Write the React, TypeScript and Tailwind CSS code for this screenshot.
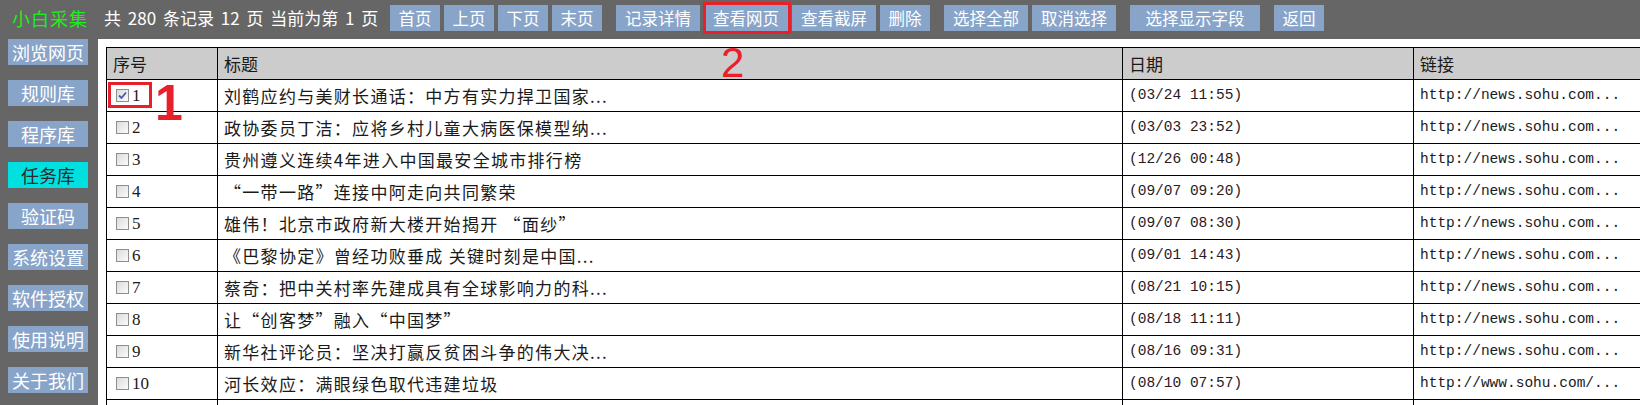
import React from 'react';

interface Row {
  id: number;
  title: string;
  date: string;
  link: string;
}

const rows: Row[] = [
  { id: 1, title: '刘鹤应约与美财长通话：中方有实力捍卫国家...', date: '(03/24 11:55)', link: 'http://news.sohu.com...' },
  { id: 2, title: '政协委员丁洁：应将乡村儿童大病医保模型纳...', date: '(03/03 23:52)', link: 'http://news.sohu.com...' },
  { id: 3, title: '贵州遵义连续4年进入中国最安全城市排行榜', date: '(12/26 00:48)', link: 'http://news.sohu.com...' },
  { id: 4, title: '“一带一路”连接中阿走向共同繁荣', date: '(09/07 09:20)', link: 'http://news.sohu.com...' },
  { id: 5, title: '雄伟！北京市政府新大楼开始揭开 “面纱”', date: '(09/07 08:30)', link: 'http://news.sohu.com...' },
  { id: 6, title: '《巴黎协定》曾经功败垂成 关键时刻是中国...', date: '(09/01 14:43)', link: 'http://news.sohu.com...' },
  { id: 7, title: '蔡奇：把中关村率先建成具有全球影响力的科...', date: '(08/21 10:15)', link: 'http://news.sohu.com...' },
  { id: 8, title: '让“创客梦”融入“中国梦”', date: '(08/18 11:11)', link: 'http://news.sohu.com...' },
  { id: 9, title: '新华社评论员：坚决打赢反贫困斗争的伟大决...', date: '(08/16 09:31)', link: 'http://news.sohu.com...' },
  { id: 10, title: '河长效应：满眼绿色取代违建垃圾', date: '(08/10 07:57)', link: 'http://www.sohu.com/...' },
];

// 顶部按钮分组
const topGroups = [
  [{ t: '首页', w: 'w-[50px]' }, { t: '上页', w: 'w-[50px]' }, { t: '下页', w: 'w-[50px]' }, { t: '末页', w: 'w-[50px]' }],
  [{ t: '记录详情', w: 'w-[84px]' }, { t: '查看网页', w: 'w-[84px]' }, { t: '查看截屏', w: 'w-[84px]' }, { t: '删除', w: 'w-[50px]' }],
  [{ t: '选择全部', w: 'w-[84px]' }, { t: '取消选择', w: 'w-[84px]' }],
  [{ t: '选择显示字段', w: 'w-[130px]' }],
  [{ t: '返回', w: 'w-[50px]' }],
];

const sideMenu = ['浏览网页', '规则库', '程序库', '任务库', '验证码', '系统设置', '软件授权', '使用说明', '关于我们'];

const cjk = { fontFamily: '"Noto Sans CJK SC", "Liberation Sans", sans-serif' };

function CheckBox({ checked }: { checked?: boolean }) {
  return (
    <span className="w-[13px] h-[13px] border border-[#8e8f8f] bg-gradient-to-br from-[#dcdcdc] to-[#fbfbfb] flex items-center justify-center shrink-0">
      {checked && (
        <svg width="9" height="9" viewBox="0 0 9 9">
          <path d="M1 4.5 L3.5 7 L8 1.5" fill="none" stroke="#3d5ea8" strokeWidth="1.8" />
        </svg>
      )}
    </span>
  );
}

export default function App() {
  return (
    <div className="relative w-[1640px] h-[405px] overflow-hidden bg-[#666666]" style={cjk}>
      {/* 顶部栏 */}
      <div className="h-[39px] flex items-start pt-[5px] whitespace-nowrap">
        <div className="ml-3 text-[18px] leading-[26px] tracking-[1px] text-[#19f019]">小白采集</div>
        <div className="ml-[16px] text-[17px] leading-[26px] text-white [word-spacing:3px] whitespace-pre w-[280px]">
          共 280 条记录 12 页 当前为第 1 页
        </div>
        <div className="ml-[6px] flex gap-[14px]">
          {topGroups.map((g, gi) => (
            <div key={gi} className="flex gap-1">
              {g.map((b) => (
                <div key={b.t} className={`${b.w} h-[26px] bg-[#88a4c9] text-white text-[16.5px] flex items-center justify-center`}>
                  {b.t}
                </div>
              ))}
            </div>
          ))}
        </div>
      </div>

      <div className="flex h-[366px]">
        {/* 左侧菜单 */}
        <div className="w-[98px] shrink-0 pl-2 flex flex-col gap-[15px]">
          {sideMenu.map((m) => (
            <div
              key={m}
              className={`w-[80px] h-[26px] text-[18px] flex items-center justify-center ${m === '任务库' ? 'bg-[#00e0e0] text-[#2a2a2a]' : 'bg-[#88a4c9] text-white'}`}
            >
              {m}
            </div>
          ))}
        </div>

        {/* 记录表格 */}
        <div className="flex-1 bg-white pl-2 pt-2 overflow-hidden">
          <div className="w-[1700px] border-l border-t border-black text-[17px] text-[#1a1a1a]">
            <div className="flex h-[32px] bg-[#cccccc] border-b border-black">
              <div className="w-[111px] border-r border-black pl-[6px] flex items-center">序号</div>
              <div className="w-[905px] border-r border-black pl-[6px] flex items-center">标题</div>
              <div className="w-[291px] border-r border-black pl-[6px] flex items-center">日期</div>
              <div className="flex-1 pl-[6px] flex items-center">链接</div>
            </div>
            {rows.map((r) => (
              <div key={r.id} className="flex h-[32px] border-b border-black">
                <div className="w-[111px] border-r border-black pl-[9px] flex items-center gap-[3px]">
                  <CheckBox checked={r.id === 1} />
                  <span className="text-[17px]" style={{ fontFamily: '"Liberation Serif", serif' }}>{r.id}</span>
                </div>
                <div className="w-[905px] border-r border-black pl-[6px] flex items-center tracking-[1.3px]">{r.title}</div>
                <div className="w-[291px] border-r border-black pl-[6px] flex items-center text-[14.5px] text-[#2a1a24]" style={{ fontFamily: '"Liberation Mono", monospace' }}>
                  {r.date}
                </div>
                <div className="flex-1 pl-[6px] flex items-center text-[14.5px]" style={{ fontFamily: '"Liberation Mono", monospace' }}>
                  {r.link}
                </div>
              </div>
            ))}
            <div className="flex h-[32px]">
              <div className="w-[111px] border-r border-black" />
              <div className="w-[905px] border-r border-black" />
              <div className="w-[291px] border-r border-black" />
              <div className="flex-1" />
            </div>
          </div>
        </div>
      </div>

      {/* 标注 */}
      <div className="absolute left-[108px] top-[82px] w-[44px] h-[26px] border-[3px] border-[#e8202a]" />
      <div className="absolute left-[703px] top-[2px] w-[88px] h-[32px] border-[3px] border-[#e8202a]" />
      <div className="absolute left-[155px] top-[78px] text-[50px] leading-none font-bold text-[#e8202a]" style={{ fontFamily: '"Liberation Sans", sans-serif' }}>1</div>
      <div className="absolute left-[721px] top-[42px] text-[42px] leading-none text-[#e8202a]" style={{ fontFamily: '"Liberation Sans", sans-serif' }}>2</div>
    </div>
  );
}
